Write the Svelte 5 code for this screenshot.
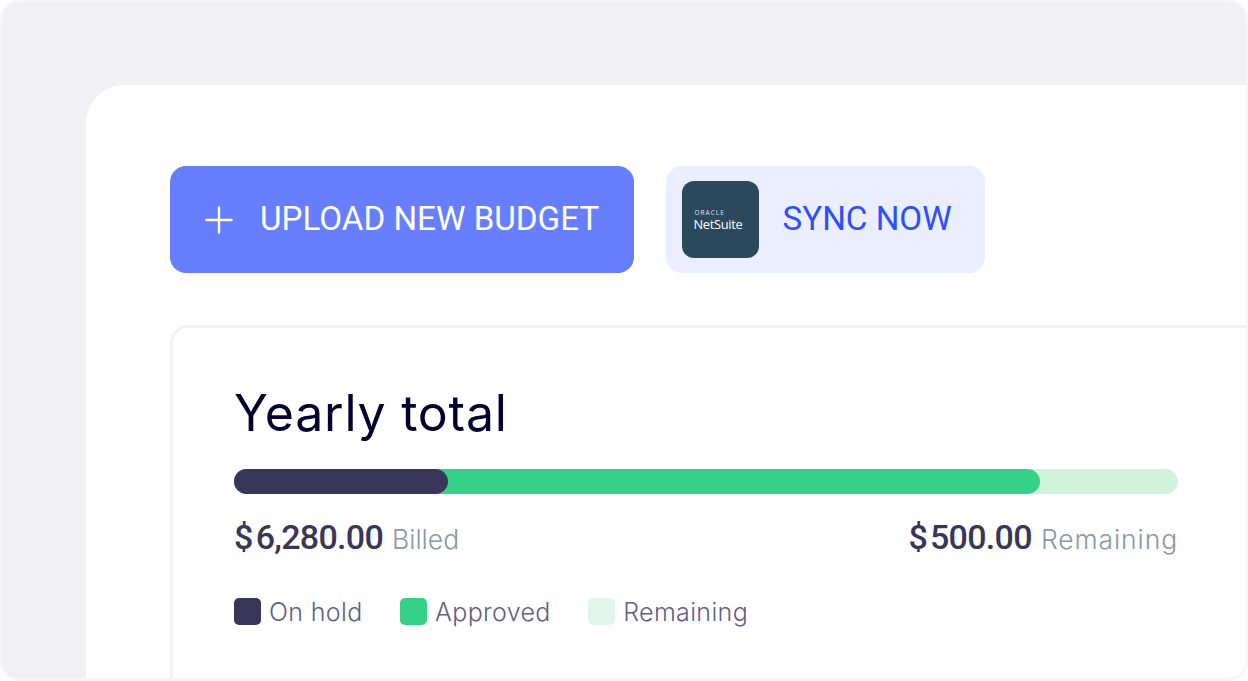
<script>
  const legend = [
    { label: 'On hold', color: '#383759' },
    { label: 'Approved', color: '#36d188' },
    { label: 'Remaining', color: '#e1f6ea' }
  ];
</script>

<div class="frame">
  <div class="panel">
    <div class="actions">
      <button class="btn primary">
        <svg class="plus" width="28" height="28" viewBox="0 0 28 28" aria-hidden="true">
          <path d="M14 1.5V26.5M1.5 14H26.5" stroke="#fff" stroke-width="2.4" stroke-linecap="round" fill="none" />
        </svg>
        <span class="label">UPLOAD NEW BUDGET</span>
      </button>
      <button class="btn sync">
        <span class="logo">
          <span class="oracle">ORACLE</span>
          <span class="netsuite">NetSuite</span>
        </span>
        <span class="label">SYNC NOW</span>
      </button>
    </div>

    <section class="card">
      <h2>Yearly total</h2>
      <div class="bar">
        <div class="approved">
          <div class="hold"></div>
        </div>
      </div>
      <div class="totals">
        <div class="total">
          <span class="amount"><span class="cur">$</span>6,280.00</span>
          <span class="cap">Billed</span>
        </div>
        <div class="total">
          <span class="amount"><span class="cur">$</span>500.00</span>
          <span class="cap">Remaining</span>
        </div>
      </div>
      <div class="legend">
        {#each legend as item}
          <div class="item">
            <span class="swatch" style="background:{item.color}"></span>
            <span class="item-label">{item.label}</span>
          </div>
        {/each}
      </div>
    </section>
  </div>
</div>

<style>
  :global(body) {
    margin: 0;
    background: #fff;
  }
  .frame {
    box-sizing: border-box;
    width: 1248px;
    height: 681px;
    overflow: hidden;
    background: #f0f0f5;
    border: 2px solid #f6f6f9;
    border-bottom-width: 3px;
    border-radius: 20px;
    padding: 83px 0 0 84px;
  }
  .panel {
    box-sizing: border-box;
    width: 1300px;
    height: 600px;
    background: #fff;
    border-top-left-radius: 38px;
    padding: 81px 0 0 84px;
    font-family: Roboto, sans-serif;
  }
  .actions {
    display: flex;
    gap: 32px;
  }
  .btn {
    display: flex;
    align-items: center;
    height: 107px;
    box-sizing: border-box;
    border: 0;
    border-radius: 16px;
    font-family: Roboto, sans-serif;
    font-size: 33.2px;
    font-weight: 400;
    line-height: 1;
  }
  .label {
    padding-bottom: 1px;
  }
  .primary {
    width: 463.5px;
    padding: 0 0 0 35px;
    background: #667eff;
    color: #fff;
    gap: 27px;
  }
  .plus {
    flex: none;
  }
  .sync {
    width: 319px;
    padding: 0 0 0 16px;
    background: #ebeeff;
    color: #2e50fb;
    gap: 24px;
  }
  .logo {
    width: 77px;
    height: 77px;
    flex: none;
    border-radius: 12px;
    background: #2a495c;
    color: #fff;
    display: flex;
    flex-direction: column;
    justify-content: center;
    padding-left: 12px;
    box-sizing: border-box;
    text-align: left;
    font-family: 'Open Sans', sans-serif;
  }
  .oracle {
    font-size: 6.5px;
    line-height: 6px;
    letter-spacing: 1px;
    margin-top: 2px;
    margin-bottom: 1px;
    padding-left: 1px;
    color: #dfe5ea;
  }
  .netsuite {
    font-size: 12.8px;
    line-height: 14px;
    letter-spacing: -0.3px;
  }
  .card {
    box-sizing: border-box;
    width: 1200px;
    height: 380px;
    margin-top: 52px;
    border: 3px solid #f2f2f6;
    border-radius: 18px;
    padding: 55px 0 0 61px;
    font-family: Inter, sans-serif;
  }
  h2 {
    margin: 0;
    font-size: 50px;
    line-height: 60px;
    font-weight: 400;
    color: #03022e;
    letter-spacing: 0.75px;
    height: 62px;
  }
  .bar {
    width: 944px;
    height: 25px;
    margin-top: 24px;
    border-radius: 13px;
    background: #d0f2dd;
  }
  .approved {
    width: 806px;
    height: 100%;
    border-radius: 13px;
    background: #36d188;
  }
  .hold {
    width: 214px;
    height: 100%;
    border-radius: 13px;
    background: #383759;
  }
  .totals {
    width: 944px;
    display: flex;
    justify-content: space-between;
    margin-top: 22px;
  }
  .total {
    display: flex;
    align-items: baseline;
    gap: 9px;
    height: 42px;
  }
  .amount {
    font-family: Roboto, sans-serif;
    font-size: 34px;
    font-weight: 500;
    line-height: 42px;
    color: #383759;
    letter-spacing: -0.7px;
  }
  .cur {
    margin-right: 3px;
  }
  .cap {
    font-size: 26.5px;
    font-weight: 300;
    line-height: 42px;
    color: #8a97a6;
  }
  .total:last-child .cap {
    letter-spacing: 0.9px;
  }
  .legend {
    display: flex;
    gap: 37.5px;
    margin-top: 38px;
  }
  .item {
    display: flex;
    align-items: center;
    gap: 8px;
    font-size: 25px;
    font-weight: 300;
    line-height: 28px;
    letter-spacing: 0.35px;
    color: #5f5f80;
  }
  .item-label {
    padding-top: 2px;
  }
  .swatch {
    width: 27px;
    height: 27px;
    border-radius: 5px;
    flex: none;
  }
</style>
